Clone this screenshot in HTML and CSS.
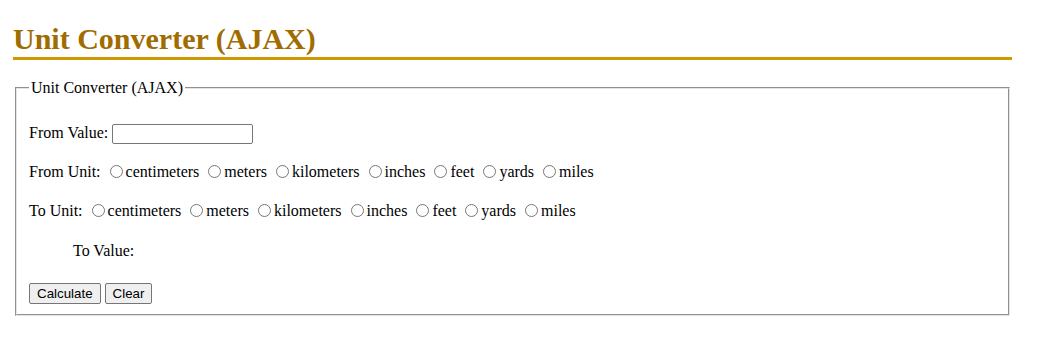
FILE: index.html
```html
<!DOCTYPE html>
<html>
<head>
<meta charset="utf-8">
<title>Unit Converter (AJAX)</title>
<link rel="stylesheet" href="styles.css">
</head>
<body>
<div class="page">
  <h1 class="title">Unit Converter (AJAX)</h1>
  <fieldset class="box">
    <legend class="legend">Unit Converter (AJAX)</legend>
    <div class="row first">From Value: <input type="text" class="value-input"></div>
    <div class="row">From Unit: <input type="radio" name="from" class="radio">centimeters <input type="radio" name="from" class="radio">meters <input type="radio" name="from" class="radio">kilometers <input type="radio" name="from" class="radio">inches <input type="radio" name="from" class="radio">feet <input type="radio" name="from" class="radio">yards <input type="radio" name="from" class="radio">miles</div>
    <div class="row">To Unit: <input type="radio" name="to" class="radio">centimeters <input type="radio" name="to" class="radio">meters <input type="radio" name="to" class="radio">kilometers <input type="radio" name="to" class="radio">inches <input type="radio" name="to" class="radio">feet <input type="radio" name="to" class="radio">yards <input type="radio" name="to" class="radio">miles</div>
    <div class="row result">To Value:</div>
    <div class="row buttons"><button type="button" class="btn">Calculate</button> <button type="button" class="btn">Clear</button></div>
  </fieldset>
</div>
</body>
</html>
```
FILE: styles.css
```css
html, body {
  background: #ffffff;
}
body {
  margin: 0;
  padding: 8px 0 0 13px;
  font-family: "Liberation Serif", "Times New Roman", serif;
  font-size: 16px;
  color: #000;
}
.page {
  width: 999px;
}
.title {
  font-size: 30px;
  font-weight: bold;
  color: #a06c00;
  margin: 12px 0 19px 0;
  padding-bottom: 0;
  line-height: 37px;
  border-bottom: 3px solid #cc9900;
}
.box {
  margin: 0 2px;
  border: 2px groove #e4e4e4;
  padding: 6px 12px 11px 12px;
}
.legend {
  padding: 0 2px;
}
.row {
  margin: 16px 0 0 0;
  line-height: 23px;
  height: 23px;
}
.row.first {
  margin-top: 18px;
}
.value-input {
  width: 137px;
  height: 16px;
  margin: 0;
  padding: 1px;
  border: 1px solid #767676;
  border-radius: 2px;
  font-size: 13px;
  vertical-align: middle;
}
.radio {
  width: 13px;
  height: 13px;
  margin: 0 3px 0 5px;
  vertical-align: -1px;
}
.result {
  padding-left: 44px;
  margin-top: 17px;
}
.buttons {
  margin-top: 18px;
}
.btn {
  font-family: Arial, "Liberation Sans", sans-serif;
  font-size: 13.33px;
  padding: 1px 7px;
  height: 21px;
  margin: 0;
  border: 1px solid #767676;
  border-radius: 2px;
  background: #efefef;
  color: #000;
  vertical-align: middle;
}
```
